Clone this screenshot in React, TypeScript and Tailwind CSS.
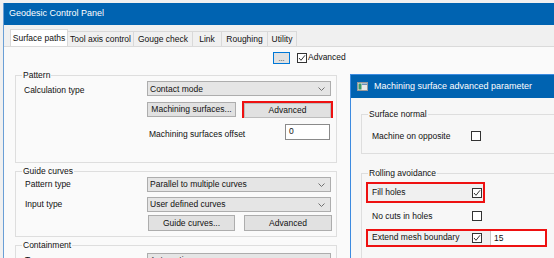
import React from 'react';

const Chevron: React.FC = () => (
  <svg width="7" height="4" viewBox="0 0 7 4">
    <path d="M0.5 0.5 L3.5 3.5 L6.5 0.5" stroke="#707070" fill="none" strokeWidth="1" />
  </svg>
);

const Check: React.FC<{ checked?: boolean }> = ({ checked }) => (
  <span className="flex items-center justify-center w-[10px] h-[10px] border border-[#333333] bg-white shrink-0">
    {checked && (
      <svg width="8" height="8" viewBox="0 0 8 8">
        <path d="M1 4 L3 6.3 L7 1.3" stroke="#333333" fill="none" strokeWidth="1" />
      </svg>
    )}
  </span>
);

const Dropdown: React.FC<{ label: string; className?: string }> = ({ label, className = '' }) => (
  <div className={`flex items-center justify-between h-[15px] w-[184px] bg-[#e5e5e5] border border-[#adadad] pl-[2px] pr-[5px] ${className}`}>
    <span>{label}</span>
    <Chevron />
  </div>
);

const Btn: React.FC<{ label: string; className?: string }> = ({ label, className = '' }) => (
  <div className={`flex items-center justify-center h-[15px] bg-[#e1e1e1] border border-[#adadad] ${className}`}>
    {label}
  </div>
);

const Group: React.FC<{ title: string; bg: string; className?: string; children?: React.ReactNode }> = ({
  title,
  bg,
  className = '',
  children,
}) => (
  <div className={`relative border border-[#dedede] ${className}`}>
    <span className={`absolute -top-[7px] left-[6px] px-[1px] leading-[12px] ${bg}`}>{title}</span>
    {children}
  </div>
);

const tabs = [
  { label: 'Tool axis control', w: 'w-[66px]' },
  { label: 'Gouge check', w: 'w-[59px]' },
  { label: 'Link', w: 'w-[29px]' },
  { label: 'Roughing', w: 'w-[46px]' },
  { label: 'Utility', w: 'w-[29px]' },
];

export default function App() {
  return (
    <div className="relative w-[554px] h-[258px] overflow-hidden bg-[#f0f0f0] pt-[3px] pl-[3px] text-[8.5px] text-[#111] font-['Liberation_Sans',Arial,sans-serif]">
      {/* Main window */}
      <div className="flex flex-col h-full border-l border-[#6a9fd6]">
        <div className="shrink-0 flex items-center h-[22px] bg-[#0063b1] pl-[5px] text-white text-[9px]">Geodesic Control Panel</div>

        {/* Tab strip */}
        <div className="shrink-0 flex items-end h-[21px] pl-[6px] bg-[#f0f0f0]">
          <div className="flex items-center justify-center w-[58px] h-[17px] bg-white border border-b-0 border-[#d9d9d9]">
            Surface paths
          </div>
          {tabs.map((t) => (
            <div
              key={t.label}
              className={`flex items-center justify-center ${t.w} h-[15px] border border-l-0 border-b-0 border-[#d9d9d9] bg-[#f0f0f0]`}
            >
              {t.label}
            </div>
          ))}
        </div>

        {/* Content */}
        <div className="flex-1 min-h-0 overflow-hidden bg-[#fafafa] border-t border-[#dadada]">
          <div className="flex items-center h-[13px] mt-[4px] pl-[269px] gap-[7px]">
            <div className="flex items-end justify-center w-[17px] h-[12px] bg-[#e1e1e1] border border-[#0078d7] leading-[8px] text-[7px]">
              ...
            </div>
            <div className="flex items-center gap-[1px]">
              <Check checked />
              <span>Advanced</span>
            </div>
          </div>

          <Group title="Pattern" bg="bg-[#fafafa]" className="ml-[11px] mt-[11px] w-[322px] h-[88px]">
            <div className="flex items-center mt-[5px] pl-[8px]">
              <span className="w-[123px] pt-[3px]">Calculation type</span>
              <Dropdown label="Contact mode" />
            </div>
            <div className="flex items-center mt-[4px] pl-[131px] gap-[6px]">
              <Btn label="Machining surfaces..." className="w-[89px]" />
              <div className="border-2 border-[#ee1111] w-[91px] h-[17px] flex">
                <Btn label="Advanced" className="flex-1 h-[13px] border-[#bdbdbd]" />
              </div>
            </div>
            <div className="flex items-center mt-[6px] pl-[133px]">
              <span className="w-[136px] pt-[4px]">Machining surfaces offset</span>
              <div className="w-[45px] h-[16px] bg-white border border-[#8a8a8a] pl-[3px] leading-[12px]">0</div>
            </div>
          </Group>

          <Group title="Guide curves" bg="bg-[#fafafa]" className="ml-[11px] mt-[8px] w-[322px] h-[66px]">
            <div className="flex items-center mt-[5px] pl-[9px]">
              <span className="w-[122px]">Pattern type</span>
              <Dropdown label="Parallel to multiple curves" />
            </div>
            <div className="flex items-center mt-[5px] pl-[9px]">
              <span className="w-[122px]">Input type</span>
              <Dropdown label="User defined curves" />
            </div>
            <div className="flex items-center mt-[3px] pl-[132px] gap-[9px]">
              <Btn label="Guide curves..." className="w-[87px] h-[16px]" />
              <Btn label="Advanced" className="w-[88px] h-[16px]" />
            </div>
          </Group>

          <Group title="Containment" bg="bg-[#fafafa]" className="ml-[11px] mt-[8px] w-[322px] h-[40px]">
            <div className="flex items-center mt-[7px] pl-[9px]">
              <span className="w-[122px]">Type</span>
              <Dropdown label="Automatic" />
            </div>
          </Group>
        </div>
      </div>

      {/* Advanced parameter dialog */}
      <div className="absolute left-[350px] top-[74px] w-[214px] h-[200px] flex flex-col border-l border-t border-[#3d8be0] bg-[#f7f7f7]">
        <div className="shrink-0 flex items-center h-[23px] bg-[#0063b1] pl-[6px] gap-[6px] text-white text-[9px]">
          <svg width="11" height="9" viewBox="0 0 11 9">
            <rect x="0.5" y="0.5" width="10" height="8" fill="#e8e8e8" stroke="#9a9a9a" />
            <rect x="1.5" y="1.5" width="3" height="6" fill="#3a9a6a" />
            <rect x="5" y="1.5" width="5" height="1.5" fill="#6a8fb8" />
          </svg>
          <span>Machining surface advanced parameter</span>
        </div>
        <div className="flex-1 pl-[10px] pt-[16px]">
          <Group title="Surface normal" bg="bg-[#f7f7f7]" className="w-[210px] h-[40px]">
            <div className="flex items-center mt-[15px] pl-[10px]">
              <span className="w-[99px]">Machine on opposite</span>
              <Check />
            </div>
          </Group>

          <Group title="Rolling avoidance" bg="bg-[#f7f7f7]" className="w-[210px] h-[100px] mt-[19px]">
            <div className="ml-[4px] mt-[8px] w-[119px] h-[21px] border-2 border-[#ee1111] bg-[#f0f0f0] flex items-center pl-[4px]">
              <span className="w-[100px]">Fill holes</span>
              <Check checked />
            </div>
            <div className="flex items-center mt-[7px] pl-[10px]">
              <span className="w-[100px]">No cuts in holes</span>
              <Check />
            </div>
            <div className="ml-[4px] mt-[6px] w-[181px] h-[18px] border-2 border-[#ee1111] bg-[#f0f0f0] flex items-center pl-[4px]">
              <span className="w-[100px]">Extend mesh boundary</span>
              <Check checked />
              <div className="ml-[8px] w-[55px] h-[14px] bg-white border-l border-[#c8c8c8] pl-[3px] leading-[14px]">15</div>
            </div>
          </Group>
        </div>
      </div>
    </div>
  );
}
